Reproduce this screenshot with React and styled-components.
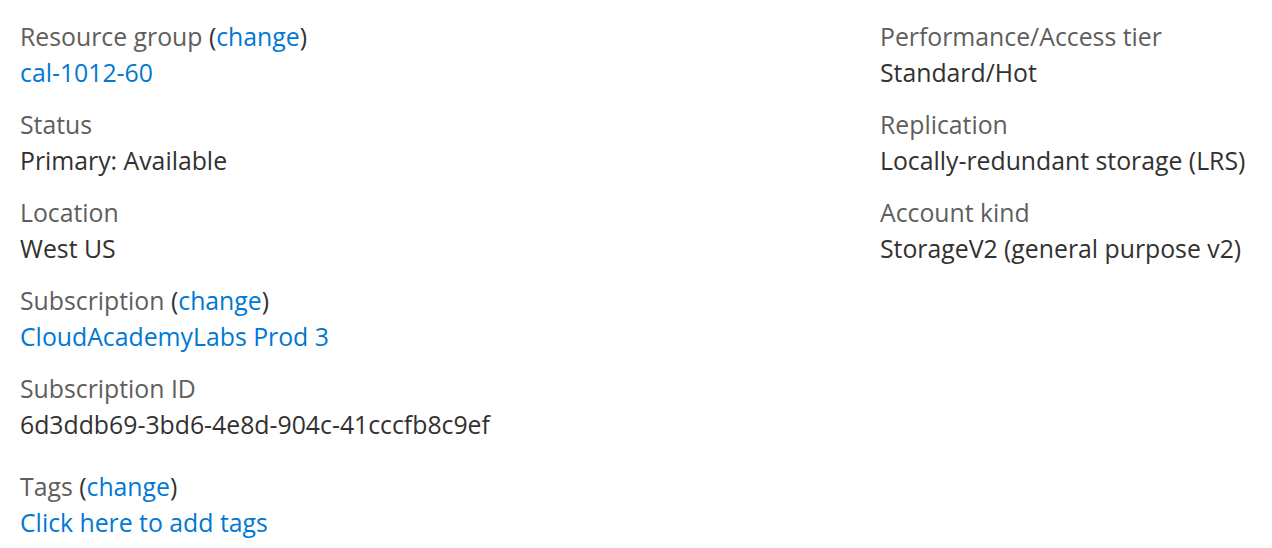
import React from 'react';
import styled, { createGlobalStyle } from 'styled-components';

const Global = createGlobalStyle`
  html, body { margin: 0; padding: 0; background: #ffffff; }
  body { font-family: "Open Sans", "Noto Sans", sans-serif; }
`;

const Page = styled.div`
  display: grid;
  grid-template-columns: 860px 1fr;
  padding: 18px 20px;
  font-size: 24.8px;
  line-height: 36px;
`;

const Column = styled.div`
  display: flex;
  flex-direction: column;
  gap: 16px;
`;

const Item = styled.div`
  display: flex;
  flex-direction: column;
  margin-top: ${(p) => (p.$spaced ? '10px' : '0')};
`;

const Label = styled.div`
  color: #605e5c;
  white-space: nowrap;
`;

const Paren = styled.span`
  color: #323130;
`;

const Value = styled.div`
  color: #323130;
  white-space: nowrap;
`;

const Link = styled.a`
  color: #0078d4;
  text-decoration: none;
  cursor: pointer;
  &:hover { text-decoration: underline; }
`;

function Field({ label, change, value, link, spaced }) {
  return (
    <Item $spaced={spaced}>
      <Label>
        {label}
        {change && (
          <>
            {' '}
            <Paren>(</Paren>
            <Link>change</Link>
            <Paren>)</Paren>
          </>
        )}
      </Label>
      <Value>{link ? <Link>{value}</Link> : value}</Value>
    </Item>
  );
}

export default function App() {
  return (
    <>
      <Global />
      <Page>
        <Column>
          <Field label="Resource group" change value="cal-1012-60" link />
          <Field label="Status" value="Primary: Available" />
          <Field label="Location" value="West US" />
          <Field label="Subscription" change value="CloudAcademyLabs Prod 3" link />
          <Field label="Subscription ID" value="6d3ddb69-3bd6-4e8d-904c-41cccfb8c9ef" />
          <Field label="Tags" change value="Click here to add tags" link spaced />
        </Column>
        <Column>
          <Field label="Performance/Access tier" value="Standard/Hot" />
          <Field label="Replication" value="Locally-redundant storage (LRS)" />
          <Field label="Account kind" value="StorageV2 (general purpose v2)" />
        </Column>
      </Page>
    </>
  );
}
